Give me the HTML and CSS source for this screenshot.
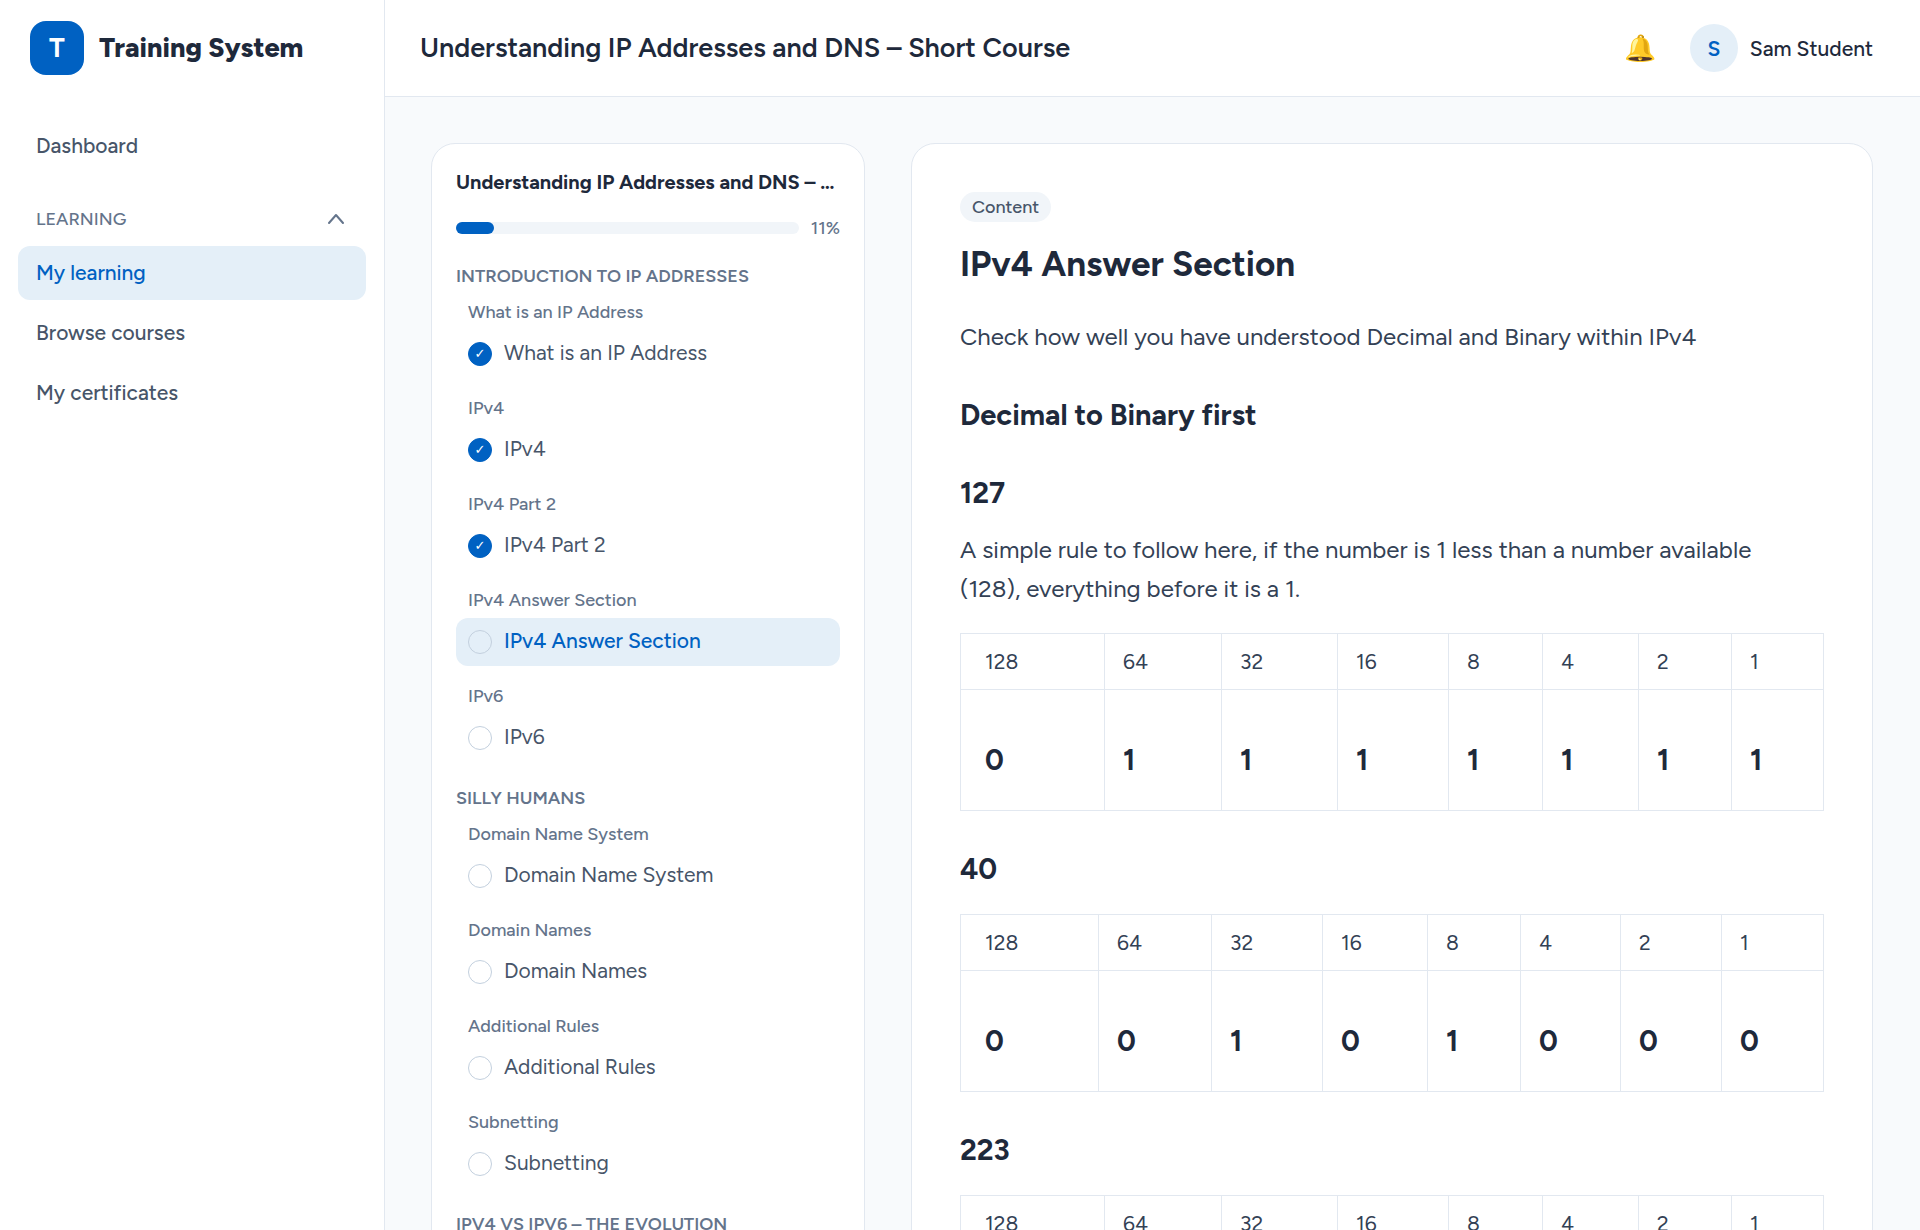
FILE: index.html
```html
<!DOCTYPE html>
<html lang="en">
<head>
  <meta charset="UTF-8" />
  <meta name="viewport" content="width=device-width, initial-scale=1.0" />
  <title>Understanding IP Addresses and DNS – Short Course</title>
  <link rel="stylesheet" href="styles.css">
</head>
<body>
<aside class="sidebar">
  <div class="brand">
    <span class="brand-logo">T</span>
    <span class="brand-name">Training System</span>
  </div>
  <nav class="nav">
    <a class="nav-link" href="#">Dashboard</a>
    <button class="nav-group" type="button" aria-expanded="true">
      Learning
      <svg class="chevron" viewBox="0 0 18 18" aria-hidden="true"><path d="M2 13 L9 5 L16 13" /></svg>
    </button>
    <a class="nav-link active" href="#">My learning</a>
    <a class="nav-link" href="#">Browse courses</a>
    <a class="nav-link" href="#">My certificates</a>
  </nav>
</aside>

<div class="page">
  <header class="topbar">
    <div class="topbar-title">Understanding IP Addresses and DNS – Short Course</div>
    <div class="topbar-user">
      <button class="bell" type="button" aria-label="Notifications">🔔</button>
      <div class="user">
        <span class="avatar">S</span>
        <span class="user-name">Sam Student</span>
      </div>
    </div>
  </header>

  <main class="content">
    <section class="card outline">
      <h2 class="outline-title">Understanding IP Addresses and DNS – Short Course</h2>
      <div class="progress">
        <div class="progress-track"><div class="progress-fill" style="width: 11%"></div></div>
        <span class="progress-value">11%</span>
      </div>

      <div class="module">
        <h3 class="module-title">Introduction to IP Addresses</h3>
        <div class="lesson">
          <h4 class="lesson-title">What is an IP Address</h4>
          <a class="step" href="#"><span class="dot done">✓</span><span class="step-name">What is an IP Address</span></a>
        </div>
        <div class="lesson">
          <h4 class="lesson-title">IPv4</h4>
          <a class="step" href="#"><span class="dot done">✓</span><span class="step-name">IPv4</span></a>
        </div>
        <div class="lesson">
          <h4 class="lesson-title">IPv4 Part 2</h4>
          <a class="step" href="#"><span class="dot done">✓</span><span class="step-name">IPv4 Part 2</span></a>
        </div>
        <div class="lesson">
          <h4 class="lesson-title">IPv4 Answer Section</h4>
          <a class="step active" href="#"><span class="dot"></span><span class="step-name">IPv4 Answer Section</span></a>
        </div>
        <div class="lesson">
          <h4 class="lesson-title">IPv6</h4>
          <a class="step" href="#"><span class="dot"></span><span class="step-name">IPv6</span></a>
        </div>
      </div>

      <div class="module">
        <h3 class="module-title">Silly Humans</h3>
        <div class="lesson">
          <h4 class="lesson-title">Domain Name System</h4>
          <a class="step" href="#"><span class="dot"></span><span class="step-name">Domain Name System</span></a>
        </div>
        <div class="lesson">
          <h4 class="lesson-title">Domain Names</h4>
          <a class="step" href="#"><span class="dot"></span><span class="step-name">Domain Names</span></a>
        </div>
        <div class="lesson">
          <h4 class="lesson-title">Additional Rules</h4>
          <a class="step" href="#"><span class="dot"></span><span class="step-name">Additional Rules</span></a>
        </div>
        <div class="lesson">
          <h4 class="lesson-title">Subnetting</h4>
          <a class="step" href="#"><span class="dot"></span><span class="step-name">Subnetting</span></a>
        </div>
      </div>

      <div class="module">
        <h3 class="module-title">IPv4 vs IPv6 – The Evolution</h3>
      </div>
    </section>

    <article class="card article">
      <span class="badge">Content</span>
      <h1>IPv4 Answer Section</h1>
      <p>Check how well you have understood Decimal and Binary within IPv4</p>
      <h2>Decimal to Binary first</h2>

      <h3>127</h3>
      <p>A simple rule to follow here, if the number is 1 less than a number available (128), everything before it is a 1.</p>
      <table class="bits">
        <tr><th>128</th><th>64</th><th>32</th><th>16</th><th>8</th><th>4</th><th>2</th><th>1</th></tr>
        <tr><td>0</td><td>1</td><td>1</td><td>1</td><td>1</td><td>1</td><td>1</td><td>1</td></tr>
      </table>

      <h3>40</h3>
      <table class="bits bits-even">
        <tr><th>128</th><th>64</th><th>32</th><th>16</th><th>8</th><th>4</th><th>2</th><th>1</th></tr>
        <tr><td>0</td><td>0</td><td>1</td><td>0</td><td>1</td><td>0</td><td>0</td><td>0</td></tr>
      </table>

      <h3>223</h3>
      <table class="bits">
        <tr><th>128</th><th>64</th><th>32</th><th>16</th><th>8</th><th>4</th><th>2</th><th>1</th></tr>
        <tr><td>1</td><td>1</td><td>0</td><td>1</td><td>1</td><td>1</td><td>1</td><td>1</td></tr>
      </table>
    </article>
  </main>
</div>
</body>
</html>
```
FILE: styles.css
```css
* {
  box-sizing: border-box;
  margin: 0;
  padding: 0;
}

body {
  display: flex;
  height: 100vh;
  overflow: hidden;
  background: #f8fafc;
  color: #1e293b;
  font-family: Figtree, Inter, sans-serif;
  font-size: 21px;
}

a {
  color: inherit;
  text-decoration: none;
}

button {
  border: none;
  background: none;
  font: inherit;
  cursor: pointer;
}

/* Sidebar */
.sidebar {
  flex: 0 0 385px;
  background: #fff;
  border-right: 1px solid #e2e8f0;
}

.brand {
  display: flex;
  align-items: center;
  gap: 15px;
  height: 96px;
  padding: 0 30px;
}

.brand-logo {
  display: flex;
  align-items: center;
  justify-content: center;
  width: 54px;
  height: 54px;
  border-radius: 16px;
  background: #0061c2;
  color: #fff;
  font-size: 27px;
  font-weight: 700;
  line-height: 30px;
}

.brand-name {
  font-size: 27px;
  font-weight: 800;
  line-height: 30px;
}

.nav {
  display: flex;
  flex-direction: column;
  gap: 6px;
  padding: 23px 18px;
}

.nav-link {
  height: 54px;
  padding: 0 18px;
  border-radius: 12px;
  color: #475569;
  font-weight: 500;
  line-height: 53px;
}

.nav-link.active {
  background: #e4eff8;
  color: #0061c2;
}

.nav-group {
  display: flex;
  align-items: center;
  justify-content: space-between;
  height: 42px;
  margin-top: 19px;
  padding: 0 21px 0 18px;
  color: #64748b;
  font-size: 18px;
  font-weight: 500;
  text-transform: uppercase;
}

.chevron {
  width: 18px;
  height: 18px;
  fill: none;
  stroke: #64748b;
  stroke-width: 2;
  stroke-linecap: round;
  stroke-linejoin: round;
}

/* Top bar */
.page {
  display: flex;
  flex: 1;
  flex-direction: column;
  min-width: 0;
}

.topbar {
  display: flex;
  flex: 0 0 97px;
  align-items: center;
  justify-content: space-between;
  padding: 0 47px 0 35px;
  background: #fff;
  border-bottom: 1px solid #e2e8f0;
}

.topbar-title {
  font-size: 27px;
  font-weight: 600;
  line-height: 30px;
}

.topbar-user,
.user {
  display: flex;
  align-items: center;
}

.topbar-user {
  gap: 34px;
}

.user {
  gap: 12px;
  font-weight: 500;
  line-height: 23px;
}

.bell {
  font-size: 26px;
  line-height: 30px;
}

.avatar {
  display: flex;
  align-items: center;
  justify-content: center;
  width: 48px;
  height: 48px;
  border-radius: 50%;
  background: #e4eff8;
  color: #0061c2;
  font-weight: 600;
}

/* Content */
.content {
  display: grid;
  flex: 1;
  grid-template-columns: 434px minmax(0, 1fr);
  gap: 46px;
  align-items: start;
  min-height: 0;
  padding: 46px 47px 46px 46px;
  overflow-y: auto;
  scrollbar-width: none;
}

.card {
  background: #fff;
  border: 1px solid #e2e8f0;
  border-radius: 24px;
}

/* Course outline */
.outline {
  padding: 24px;
}

.outline-title {
  overflow: hidden;
  font-size: 20px;
  font-weight: 700;
  line-height: 28px;
  text-overflow: ellipsis;
  white-space: nowrap;
}

.progress {
  display: flex;
  align-items: center;
  gap: 12px;
  margin-top: 20px;
  color: #64748b;
  font-size: 18px;
  font-weight: 500;
  line-height: 24px;
}

.progress-track {
  flex: 1;
  height: 12px;
  border-radius: 6px;
  background: #f1f5f9;
}

.progress-fill {
  height: 100%;
  border-radius: 6px;
  background: #0061c2;
}

.module {
  margin-top: 24px;
}

.module-title {
  margin-bottom: 12px;
  color: #64748b;
  font-size: 18px;
  font-weight: 600;
  line-height: 24px;
  text-transform: uppercase;
}

.lesson + .lesson {
  margin-top: 18px;
}

.lesson-title {
  margin-bottom: 6px;
  padding-left: 12px;
  color: #64748b;
  font-size: 18px;
  font-weight: 500;
  line-height: 24px;
}

.step {
  display: flex;
  align-items: center;
  gap: 12px;
  height: 48px;
  padding: 0 12px;
  border-radius: 12px;
  color: #475569;
}

.step-name {
  line-height: 46px;
  padding-bottom: 2px;
}

.step.active {
  background: #e4eff8;
  color: #0061c2;
  font-weight: 500;
}

.dot {
  width: 24px;
  height: 24px;
  border: 1px solid #c3d0de;
  border-radius: 50%;
  color: #fff;
  font-family: "DejaVu Sans", sans-serif;
  font-size: 13px;
  line-height: 22px;
  text-align: center;
}

.dot.done {
  border-color: #0061c2;
  background: #0061c2;
}

/* Lesson content */
.article {
  padding: 48px;
}

.badge {
  display: inline-block;
  padding: 0 12px;
  border-radius: 15px;
  background: #f1f5f9;
  color: #475569;
  font-size: 18px;
  font-weight: 500;
  line-height: 30px;
  vertical-align: top;
}

.article h1 {
  margin-top: 19px;
  font-size: 35px;
  font-weight: 700;
  line-height: 46px;
}

.article p {
  padding-right: 12px;
  color: #334155;
  font-size: 24px;
  line-height: 39px;
}

.article h1 + p {
  margin-top: 30px;
}

.article h2,
.article h3 {
  font-size: 29px;
  font-weight: 700;
  line-height: 38px;
}

.article h2 {
  margin-top: 40px;
}

.article h3 {
  margin-top: 39px;
  margin-bottom: 18px;
}

.article h2 + h3 {
  margin-top: 40px;
}

.bits {
  width: 100%;
  margin-top: 25px;
  border-collapse: collapse;
  table-layout: fixed;
}

.article h3 + .bits {
  margin-top: 26px;
}

.bits th,
.bits td {
  padding: 0 18px;
  border: 1px solid #e2e8f0;
  text-align: left;
}

.bits th:first-child,
.bits td:first-child {
  padding-left: 24px;
}

.bits th {
  height: 56px;
  padding-bottom: 1px;
  color: #334155;
  font-weight: 400;
}

.bits td {
  padding-top: 55px;
  padding-bottom: 35px;
  font-size: 29px;
  font-weight: 700;
  line-height: 30px;
}

.bits th:nth-child(1) { width: 144px; }
.bits th:nth-child(2) { width: 117px; }
.bits th:nth-child(3) { width: 116px; }
.bits th:nth-child(4) { width: 111px; }
.bits th:nth-child(5) { width: 94px; }
.bits th:nth-child(6) { width: 96px; }
.bits th:nth-child(7) { width: 93px; }
.bits th:nth-child(8) { width: 92px; }

.bits-even th:nth-child(1) { width: 138px; }
.bits-even th:nth-child(2) { width: 113px; }
.bits-even th:nth-child(3) { width: 111px; }
.bits-even th:nth-child(4) { width: 105px; }
.bits-even th:nth-child(5) { width: 93px; }
.bits-even th:nth-child(6) { width: 100px; }
.bits-even th:nth-child(7) { width: 101px; }
.bits-even th:nth-child(8) { width: 102px; }
```
